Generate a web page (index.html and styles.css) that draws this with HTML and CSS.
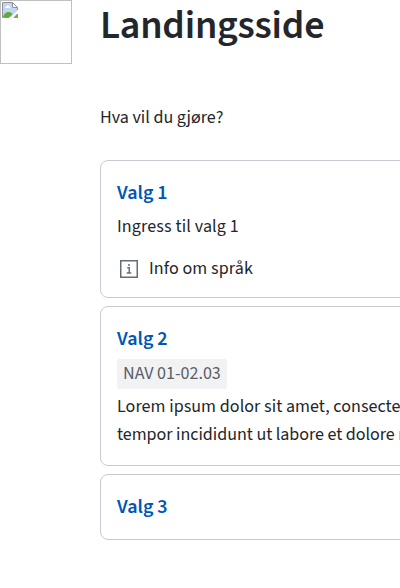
FILE: index.html
```html
<!DOCTYPE html>
<html lang="no">
<head>
<meta charset="utf-8">
<title>Landingsside</title>
<link rel="stylesheet" href="styles.css">
</head>
<body>
<div class="page">
  <div class="picture">
    <svg width="16" height="16" viewBox="0 0 16 16"><path d="M.5.500h10l5 5v10H.5z" fill="#c3d5f5"/><path d="M3 6q0-1.500 1.500-1.500Q5 3 6.200 3.300 7.500 3.500 7.500 5 9 5 8.500 6z" fill="#fff"/><path d="M1 15q1.500-4.500 5-5 3-.5 4.500 2L8 15z" fill="#5aae32"/><path d="M16 8.500v3L11.500 16H7.500z" fill="#fff"/><path d="M7 15.500H.5V.5h10l5 5V8" fill="none" stroke="#929292"/><path d="M10.500.5v5h5z" fill="#fff" stroke="#929292"/><path d="M12 15.500h3.500V12z" fill="#5aae32" stroke="#929292"/></svg>
  </div>
  <main class="content">
    <h1>Landingsside</h1>
    <p class="question">Hva vil du gjøre?</p>
    <div class="cards">
      <section class="card">
        <h2>Valg 1</h2>
        <p class="ingress">Ingress til valg 1</p>
        <div class="info">
          <svg width="24" height="24" viewBox="0 0 24 24" fill="none" stroke="#646c7a" stroke-width="1.500"><path d="M3.750 3.750h16.500v16.500H3.750z"/><path d="M10.250 10.750h2V16M9.750 16h4.500" stroke-width="1.400"/><circle cx="12" cy="8" r="1" fill="#646c7a" stroke="none"/></svg>
          <span>Info om språk</span>
        </div>
      </section>
      <section class="card">
        <h2>Valg 2</h2>
        <span class="tag">NAV 01-02.03</span>
        <p class="lorem">Lorem ipsum dolor sit amet, consectetur adipiscing elit, sed do eiusmod<br><span class="tight">tempor incididunt ut labore et dolore magna aliqua.</span></p>
      </section>
      <section class="card">
        <h2>Valg 3</h2>
      </section>
    </div>
  </main>
</div>
</body>
</html>
```
FILE: styles.css
```css
* { box-sizing: border-box; }
body { margin: 0; height: 588px; overflow: hidden; background: #fff; color: #23262a; font: 18px/28px "Source Sans 3", "Source Sans Pro", "Noto Sans CJK SC", "Noto Sans", sans-serif; }
h1, h2, p { margin: 0; }
.page { display: flex; gap: 28px; }
.picture { flex: none; width: 72px; height: 64px; border: 1px solid #c0c0c0; padding: 1px; }
.picture svg { display: block; }
.content { flex: none; width: 640px; }
h1 { font-size: 40px; line-height: 52px; font-weight: 600; letter-spacing: -0.25px; }
.question { margin-top: 52px; }
.cards { display: flex; flex-direction: column; gap: 8px; margin-top: 28px; }
.card { border: 1px solid #c9c9d3; border-radius: 8px; padding: 16px; white-space: nowrap; }
h2 { color: #0056b4; font-size: 20px; line-height: 32px; font-weight: 600; }
.card p { margin-top: 4px; }
.ingress { letter-spacing: 0.14px; }
.lorem { letter-spacing: 0.06px; }
.tight { letter-spacing: -0.03px; }
.info { display: flex; gap: 8px; align-items: center; margin-top: 16px; line-height: 24px; letter-spacing: 0.1px; }
.tag { display: block; width: 110px; height: 30px; margin-top: 4px; padding: 0 6px; line-height: 30px; border-radius: 2px; background: #f1f2f4; color: #5a5f68; }
```
